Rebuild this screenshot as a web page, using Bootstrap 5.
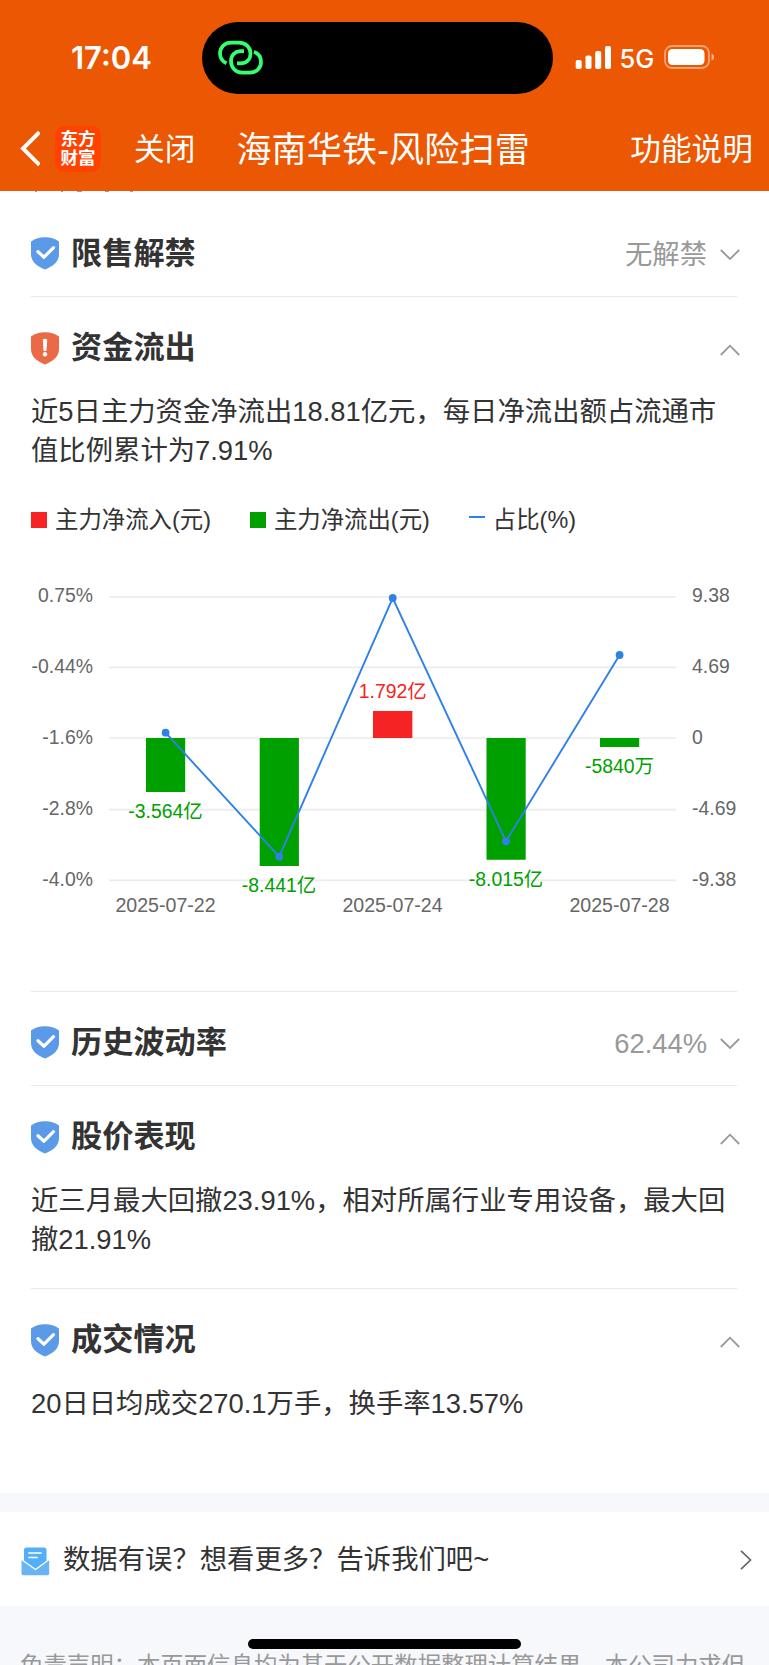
<!DOCTYPE html>
<html lang="zh-CN">
<head>
<meta charset="utf-8">
<meta name="viewport" content="width=device-width, initial-scale=1">
<title>海南华铁-风险扫雷</title>
<link href="https://cdn.jsdelivr.net/npm/bootstrap@5.3.0/dist/css/bootstrap.min.css" rel="stylesheet">
<style>
body{font-family:"Liberation Sans","Noto Sans CJK SC",sans-serif;color:#333;background:#f6f8fb}
svg{display:block;flex-shrink:0}
.phone{width:769px;height:1665px}
.topbar{height:191px;background:#eb5702}
.status{height:116px;padding-top:22px}
.clock{font:600 31px/72px Inter,sans-serif;width:201.5px;padding-left:71px}
.island{width:351px;height:72px;border-radius:36px;padding:17px 0 0 15px}
.signal{margin:23px 0 0 22px}
.net{font:500 25.5px/72px Inter,sans-serif;margin:1px 0 0 8px;width:34px}
.battery{margin:23px 0 0 10px}
.navrow{height:65px;line-height:65px;font-size:30.7px;padding:1px 16px 0 20px}
.brand{width:46px;height:46px;border-radius:9px;background:#ff4200;font-weight:700;font-size:17.5px;line-height:19px;padding-top:4px;margin-left:15px}
.navtitle{font-size:35px;letter-spacing:.2px;margin-left:41px}
.sheet{padding:12px 32px 0 31px;height:1302px}
.scrolled{left:31px;top:191px}
.head{height:94px;padding-top:8px}
.head h2{font-size:31.2px;font-weight:700;line-height:44px;margin:0 0 0 12px}
.headval{font-size:27.35px;color:#999;line-height:40px;margin:2px 13px 0 0}
.head .chev{margin:3px -3px 0 0}
.rule{border-bottom:1px solid #e9e9e9}
.desc{font-size:27.35px;line-height:39px;margin:0;padding-top:1px;white-space:nowrap}
.legend{font-size:23.4px;line-height:32px;margin-top:34px}
.key{width:16px;height:16px;margin-right:8px}
.chart{height:456px}
.chart text{font-size:19.4px}
.chart .dates text{font-size:19.6px}
.feedback{margin-top:19px;height:94px;padding:0 17px 0 21px;font-size:27.35px}
.legal{font-size:23.4px;line-height:39px;color:#999;padding:41px 20px 0;white-space:nowrap}
.homebar{left:248px;top:1639px;width:273px;height:10px}
</style>
</head>
<body>
<svg width="0" height="0" class="position-absolute">
  <defs>
    <symbol id="ok" viewBox="0 0 28 33"><path d="M0 4.5Q7 0 14 .3Q21 0 28 4.5V17C28 25 22 29 14 32.5C6 29 0 25 0 17Z" fill="#5b99e9"/><path d="M7 14.7L13 20.2L22.5 10.7" fill="none" stroke="#fff" stroke-width="3.2" stroke-linecap="round" stroke-linejoin="round"/></symbol>
    <symbol id="warn" viewBox="0 0 28 33"><path d="M0 4.5Q7 0 14 .3Q21 0 28 4.5V17C28 25 22 29 14 32.5C6 29 0 25 0 17Z" fill="#ea6a46"/><path d="M11.8 7.5Q14 5.8 16.2 7.5L15.5 18.5Q14 20 12.5 18.5Z" fill="#fff"/><circle cx="14" cy="22.3" r="2.2" fill="#fff"/></symbol>
    <symbol id="down" viewBox="0 0 20 12"><path d="M.8 1L10 10L19.2 1" fill="none" stroke="#999" stroke-width="1.8"/></symbol>
    <symbol id="up" viewBox="0 0 20 12"><path d="M.8 11L10 1.7L19.2 11" fill="none" stroke="#999" stroke-width="1.8"/></symbol>
  </defs>
</svg>
<div class="phone position-relative overflow-hidden">
  <header class="topbar text-white">
    <div class="status d-flex">
      <div class="clock">17:04</div>
      <div class="island bg-black">
        <svg width="48" height="38" viewBox="0 0 48 38" fill="none" stroke="#34ff6f" stroke-width="3.7"><path d="M9.5 24.3C4.500 22 3 18 3 14.500C3 8 8 3.700 14 3.700H22C29 3.700 33.500 8.500 33.500 14.500C33.500 21 29 24.300 23.500 24.300H20"/><path d="M27 12.100H24C18 12.100 14 16.300 14 22C14 28.500 18.500 33.700 25 33.700H32.500C39.500 33.700 44 29 44 23C44 17.800 41.500 14.400 37 12.700"/></svg>
      </div>
      <svg class="signal" width="37" height="25" viewBox="0 0 37 25" fill="#fff"><rect x=".7" y="15" width="6" height="9" rx="1.8"/><rect x="10.5" y="10.5" width="6" height="13.5" rx="1.8"/><rect x="20.2" y="6" width="6" height="18" rx="1.8"/><rect x="30" y="1" width="6" height="23" rx="1.8"/></svg>
      <div class="net">5G</div>
      <svg class="battery" width="52" height="25" viewBox="0 0 52 25"><rect x="1" y="1" width="44" height="22" rx="7" fill="none" stroke="#fff" stroke-opacity=".45" stroke-width="1.8"/><rect x="4" y="4" width="36.5" height="16" rx="4.5" fill="#fff"/><path d="M47.5 8.5C51 9.5 51 14.5 47.5 15.5Z" fill="#fff" fill-opacity=".5"/></svg>
    </div>
    <nav class="navrow d-flex align-items-center">
      <svg width="20" height="36" viewBox="0 0 20 36"><path d="M18 2.500L3 17.500L18 32.500" fill="none" stroke="#fff" stroke-width="3.9" stroke-linecap="square"/></svg>
      <div class="brand text-center">东方<br>财富</div>
      <span style="margin-left:33px">关闭</span>
      <span class="navtitle">海南华铁-风险扫雷</span>
      <span class="ms-auto">功能说明</span>
    </nav>
  </header>
  <main class="sheet bg-white">
    <svg class="scrolled position-absolute" width="110" height="1" fill="#a09a96"><path d="M4 0h2v1H4zM30 0h2v1h-2zM46 0h5v1h-5zM74 0h4v1h-4zM99 0h3v1h-3z"/></svg>
    <section class="head rule d-flex align-items-center"><svg width="28" height="33"><use href="#ok"/></svg><h2>限售解禁</h2><span class="headval ms-auto">无解禁</span><svg class="chev" width="20" height="12"><use href="#down"/></svg></section>
    <section>
      <div class="head d-flex align-items-center"><svg width="28" height="33"><use href="#warn"/></svg><h2>资金流出</h2><svg class="chev ms-auto" width="20" height="12"><use href="#up"/></svg></div>
      <p class="desc">近5日主力资金净流出18.81亿元，每日净流出额占流通市<br>值比例累计为7.91%</p>
      <div class="legend d-flex align-items-center">
        <i class="key" style="background:#f52323"></i><span>主力净流入(元)</span>
        <i class="key" style="background:#00a000;margin-left:39px"></i><span>主力净流出(元)</span>
        <i class="key" style="height:2px;background:#2f80e7;margin:-6px 8px 0 39px"></i><span>占比(%)</span>
      </div>
      <div class="chart rule">
      <svg width="707" height="400" viewBox="31 536 707 400">
        <path d="M109 597H676M109 667.3H676M109 738H676M109 809.7H676M109 880.3H676" stroke="#ececec" stroke-width="1.7"/>
        <g fill="#00a000"><path d="M146 738h39.2v54H146zM259.7 738h39.2v128H259.7zM486.5 738h39.2v121.7h-39.2zM600 738h39.2v9H600z"/></g>
        <path d="M373 711h39.4v27H373z" fill="#f52323"/>
        <path d="M165.6 732.7L279.2 856.7L392.7 598L506 841.3L619.6 655" fill="none" stroke="#2f80e7" stroke-width="1.9"/>
        <g fill="#2f80e7"><circle cx="165.6" cy="732.7" r="3.9"/><circle cx="279.2" cy="856.7" r="3.9"/><circle cx="392.7" cy="598" r="3.9"/><circle cx="506" cy="841.3" r="3.9"/><circle cx="619.6" cy="655" r="3.9"/></g>
        <g fill="#666" text-anchor="end"><text x="93" y="602">0.75%</text><text x="93" y="673">-0.44%</text><text x="93" y="744">-1.6%</text><text x="93" y="815.3">-2.8%</text><text x="93" y="886.3">-4.0%</text></g>
        <g fill="#666"><text x="692" y="602">9.38</text><text x="692" y="673">4.69</text><text x="692" y="744">0</text><text x="692" y="815.3">-4.69</text><text x="692" y="886.3">-9.38</text></g>
        <g class="dates" fill="#666" text-anchor="middle"><text x="165.5" y="912">2025-07-22</text><text x="392.5" y="912">2025-07-24</text><text x="619.5" y="912">2025-07-28</text></g>
        <g fill="#00a000" text-anchor="middle"><text x="165.5" y="818.3">-3.564亿</text><text x="279" y="892">-8.441亿</text><text x="506" y="886.3">-8.015亿</text><text x="619.5" y="772.7">-5840万</text></g>
        <text x="392.7" y="697.5" text-anchor="middle" fill="#f52323">1.792亿</text>
      </svg>
      </div>
    </section>
    <section class="head rule d-flex align-items-center"><svg width="28" height="33"><use href="#ok"/></svg><h2>历史波动率</h2><span class="headval ms-auto">62.44%</span><svg class="chev" width="20" height="12"><use href="#down"/></svg></section>
    <section class="rule" style="height:203px">
      <div class="head d-flex align-items-center"><svg width="28" height="33"><use href="#ok"/></svg><h2>股价表现</h2><svg class="chev ms-auto" width="20" height="12"><use href="#up"/></svg></div>
      <p class="desc">近三月最大回撤23.91%，相对所属行业专用设备，最大回<br>撤21.91%</p>
    </section>
    <section>
      <div class="head d-flex align-items-center"><svg width="28" height="33"><use href="#ok"/></svg><h2>成交情况</h2><svg class="chev ms-auto" width="20" height="12"><use href="#up"/></svg></div>
      <p class="desc">20日日均成交270.1万手，换手率13.57%</p>
    </section>
  </main>
  <div class="feedback bg-white d-flex align-items-center">
    <svg width="29" height="29" viewBox="0 0 29 29" style="margin-top:4px"><path d="M3 3Q3 .5 5.5 .5H23Q25.500 .5 25.500 3V15L14.500 24L3 15Z" fill="#55aef8"/><path d="M.5 12.500L14.500 22.500L28.200 12.500V26.500Q28.200 28.300 26.500 28.300H2Q.5 28.300 .5 26.500Z" fill="#69b5f4"/><path d="M.5 12.500L14.500 22.500L28.200 12.500" fill="none" stroke="#fff" stroke-width="1.300"/><path d="M8 6H20M8 10.500H16" stroke="#fff" stroke-width="1.700" stroke-linecap="round"/></svg>
    <span style="margin:2px 0 0 13px">数据有误？想看更多？告诉我们吧~</span>
    <svg class="ms-auto" style="margin-top:2px" width="12" height="20" viewBox="0 0 12 20"><path d="M1 .8L10.500 10L1 19.200" fill="none" stroke="#666" stroke-width="1.700"/></svg>
  </div>
  <footer class="legal">免责声明：本页面信息均为基于公开数据整理计算结果，本公司力求但</footer>
  <div class="homebar position-absolute rounded-pill bg-black"></div>
</div>
<script src="https://cdn.jsdelivr.net/npm/bootstrap@5.3.0/dist/js/bootstrap.bundle.min.js"></script>
</body>
</html>
